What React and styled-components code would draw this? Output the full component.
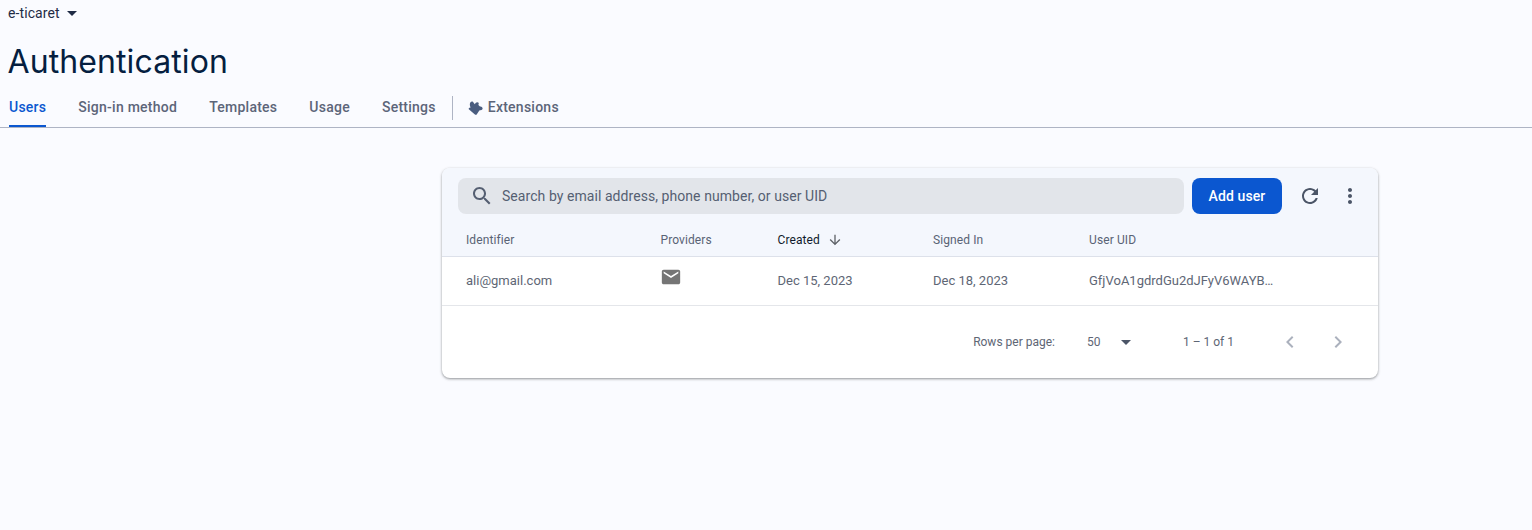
import React from 'react';
import styled, { createGlobalStyle } from 'styled-components';

const GlobalStyle = createGlobalStyle`
  html, body {
    margin: 0;
    padding: 0;
    height: 100%;
    background: #fafbff;
    font-family: Roboto, "Liberation Sans", sans-serif;
  }
  * { box-sizing: border-box; }
`;

const Page = styled.div`
  width: 1532px;
  height: 530px;
  overflow: hidden;
  background: #fafbff;
`;

const Header = styled.header`
  height: 128px;
  border-bottom: 1px solid #aeb4c4;
  display: flex;
  flex-direction: column;
  padding-left: 8px;
`;

const ProjectRow = styled.div`
  display: flex;
  align-items: center;
  height: 26px;
  margin-bottom: 1px;
  font-size: 14px;
  letter-spacing: 0.1px;
  color: #1f2b45;
`;

const Title = styled.h1`
  margin: 13px 0 0 -0.5px;
  height: 43px;
  font-family: Inter, sans-serif;
  font-size: 32px;
  line-height: 44px;
  letter-spacing: 0.1px;
  font-weight: 400;
  color: #051e3f;
`;

const Tabs = styled.nav`
  display: flex;
  align-items: stretch;
  height: 44px;
  padding-left: 1px;
`;

const Tab = styled.a`
  display: flex;
  align-items: center;
  gap: 4px;
  margin-right: 32px;
  padding-top: 6px;
  font-size: 14px;
  font-weight: 500;
  letter-spacing: 0.25px;
  color: ${p => (p.$active ? '#0b57d0' : '#5c6579')};
  border-bottom: 2px solid ${p => (p.$active ? '#0b57d0' : 'transparent')};
`;

const TabDivider = styled.div`
  width: 1px;
  height: 24px;
  margin: 13px 15px 0 -16px;
  background: #aeb4c4;
`;

const Card = styled.section`
  width: 936px;
  height: 210px;
  margin: 40px 0 0 442px;
  background: #fff;
  border-radius: 8px;
  overflow: hidden;
  box-shadow: 0 1px 3px rgba(60, 64, 67, 0.4), 0 1px 2px rgba(60, 64, 67, 0.2);
`;

const Toolbar = styled.div`
  display: flex;
  align-items: center;
  height: 56px;
  padding-left: 16px;
  background: #f4f7fd;
`;

const SearchBox = styled.div`
  display: flex;
  align-items: center;
  width: 726px;
  height: 36px;
  padding-left: 12px;
  gap: 8px;
  border-radius: 8px;
  background: #e2e5ea;
  font-size: 14px;
  letter-spacing: 0.06px;
  color: #555f72;
`;

const AddButton = styled.button`
  width: 90px;
  height: 36px;
  margin-left: 8px;
  border: 0;
  border-radius: 8px;
  background: #0b57d0;
  color: #fff;
  font-family: inherit;
  font-size: 14px;
  font-weight: 500;
  letter-spacing: 0.1px;
`;

const IconButton = styled.div`
  display: flex;
  align-items: center;
  justify-content: center;
  width: 40px;
  height: 40px;
  margin-left: ${p => (p.$first ? '8px' : '0')};
  color: #4b5567;
`;

const TableGrid = styled.div`
  display: grid;
  grid-template-columns: 194.5px 117px 155.5px 156px 1fr;
  align-items: center;
  padding-left: 24px;
`;

const HeadRow = styled(TableGrid)`
  height: 33px;
  padding-bottom: 1px;
  background: #f4f7fd;
  border-bottom: 1px solid #dde1ea;
`;

const HeadCell = styled.div`
  display: flex;
  align-items: center;
  gap: 8px;
  font-size: 12px;
  letter-spacing: 0.1px;
  color: ${p => (p.$sorted ? '#111a2c' : '#596375')};
`;

const BodyRow = styled(TableGrid)`
  height: 49px;
  padding-bottom: 1px;
  border-bottom: 1px solid #e4e6ea;
`;

const BodyCell = styled.div`
  font-size: 13px;
  color: #5e6675;
`;

const MailCell = styled.div`
  display: flex;
  margin: -8px 0 0 -0.5px;
  color: #757575;
`;

const Footer = styled.div`
  display: flex;
  align-items: center;
  justify-content: flex-end;
  height: 72px;
  font-size: 12px;
  color: #5e6675;
`;

const RowsLabel = styled.span`
  margin-right: 32px;
`;

const RowsValue = styled.div`
  display: flex;
  align-items: center;
  width: 48px;
  gap: 14px;
  margin-right: 48px;
`;

const RangeText = styled.span`
  margin-right: 44px;
`;

const Pager = styled.div`
  display: flex;
  gap: 24px;
  margin-right: 28px;
  color: #abb1bd;
`;

const Glyph = styled.svg`
  flex: none;
  fill: currentColor;
  color: ${p => p.$color || 'inherit'};
  margin-left: ${p => p.$shift || 0}px;
  margin-top: ${p => p.$lift || 0}px;
`;

const Svg = ({ d, size = 24, box = 24, color, shift, lift }) => (
  <Glyph width={size} height={size} viewBox={`0 0 ${box} ${box}`} $color={color} $shift={shift} $lift={lift}>
    <path d={d} />
  </Glyph>
);

const ICONS = {
  drop: 'M7 10l5 5 5-5z',
  // firebase's tilted puzzle piece, traced on a 16 box
  ext: 'M2.5 2.2C3.5 1 5.2 1.4 5.6 2.8L6.8 4.2 7.6 3C8.4 2.2 10 2 10.8 3L10.4 5 12 6.6C13.4 6.2 14.8 7.4 14.6 8.8 14.4 10 13 10.6 12 10L11 11 8.5 14.8H7.2L.8 9.2C.4 8.6.8 7.8 2.6 7.4 1.6 5.6 1.6 3.4 2.5 2.2Z',
  search: 'M15.5 14h-.79l-.28-.27C15.41 12.59 16 11.11 16 9.5 16 5.91 13.09 3 9.5 3S3 5.91 3 9.5 5.91 16 9.5 16c1.61 0 3.09-.59 4.23-1.57l.27.28v.79l5 4.99L20.49 19l-4.99-5zm-6 0C7.01 14 5 11.99 5 9.5S7.01 5 9.5 5 14 7.01 14 9.5 11.99 14 9.5 14z',
  refresh: 'M17.65 6.35C16.2 4.9 14.21 4 12 4c-4.42 0-7.99 3.58-7.99 8s3.57 8 7.99 8c3.73 0 6.84-2.55 7.73-6h-2.08c-.82 2.33-3.04 4-5.65 4-3.31 0-6-2.69-6-6s2.69-6 6-6c1.66 0 3.14.69 4.22 1.78L13 11h7V4l-2.35 2.35z',
  more: 'M12 8c1.1 0 2-.9 2-2s-.9-2-2-2-2 .9-2 2 .9 2 2 2zm0 2c-1.1 0-2 .9-2 2s.9 2 2 2 2-.9 2-2-.9-2-2-2zm0 6c-1.1 0-2 .9-2 2s.9 2 2 2 2-.9 2-2-.9-2-2-2z',
  arrow: 'M20 12l-1.41-1.41L13 16.17V4h-2v12.17l-5.58-5.59L4 12l8 8 8-8z',
  mail: 'M20 4H4c-1.1 0-1.99.9-1.99 2L2 18c0 1.1.9 2 2 2h16c1.1 0 2-.9 2-2V6c0-1.1-.9-2-2-2zm0 4l-8 5-8-5V6l8 5 8-5v2z',
  left: 'M15.41 7.41L14 6l-6 6 6 6 1.41-1.41L10.83 12z',
  right: 'M10 6L8.59 7.41 13.17 12l-4.58 4.58L10 18l6-6z',
};

export default function App() {
  return (
    <Page>
      <GlobalStyle />
      <Header>
        <ProjectRow>
          e-ticaret
          <Svg d={ICONS.drop} shift={0.5} />
        </ProjectRow>
        <Title>Authentication</Title>
        <Tabs>
          <Tab $active>Users</Tab>
          <Tab>Sign-in method</Tab>
          <Tab>Templates</Tab>
          <Tab>Usage</Tab>
          <Tab>Settings</Tab>
          <TabDivider />
          <Tab>
            <Svg d={ICONS.ext} size={16} box={16} color="#4a5d80" lift={1} />
            Extensions
          </Tab>
        </Tabs>
      </Header>

      <Card>
        <Toolbar>
          <SearchBox>
            <Svg d={ICONS.search} />
            Search by email address, phone number, or user UID
          </SearchBox>
          <AddButton>Add user</AddButton>
          <IconButton $first><Svg d={ICONS.refresh} /></IconButton>
          <IconButton><Svg d={ICONS.more} /></IconButton>
        </Toolbar>
        <HeadRow>
          <HeadCell>Identifier</HeadCell>
          <HeadCell>Providers</HeadCell>
          <HeadCell $sorted>
            Created
            <Svg d={ICONS.arrow} size={16} color="#5f6368" shift={-1} />
          </HeadCell>
          <HeadCell>Signed In</HeadCell>
          <HeadCell>User UID</HeadCell>
        </HeadRow>
        <BodyRow>
          <BodyCell>ali@gmail.com</BodyCell>
          <MailCell><Svg d={ICONS.mail} size={22} /></MailCell>
          <BodyCell>Dec 15, 2023</BodyCell>
          <BodyCell>Dec 18, 2023</BodyCell>
          <BodyCell>GfjVoA1gdrdGu2dJFyV6WAYB…</BodyCell>
        </BodyRow>
        <Footer>
          <RowsLabel>Rows per page:</RowsLabel>
          <RowsValue>
            50
            <Svg d={ICONS.drop} color="#4b5567" />
          </RowsValue>
          <RangeText>1 – 1 of 1</RangeText>
          <Pager>
            <Svg d={ICONS.left} />
            <Svg d={ICONS.right} />
          </Pager>
        </Footer>
      </Card>
    </Page>
  );
}
